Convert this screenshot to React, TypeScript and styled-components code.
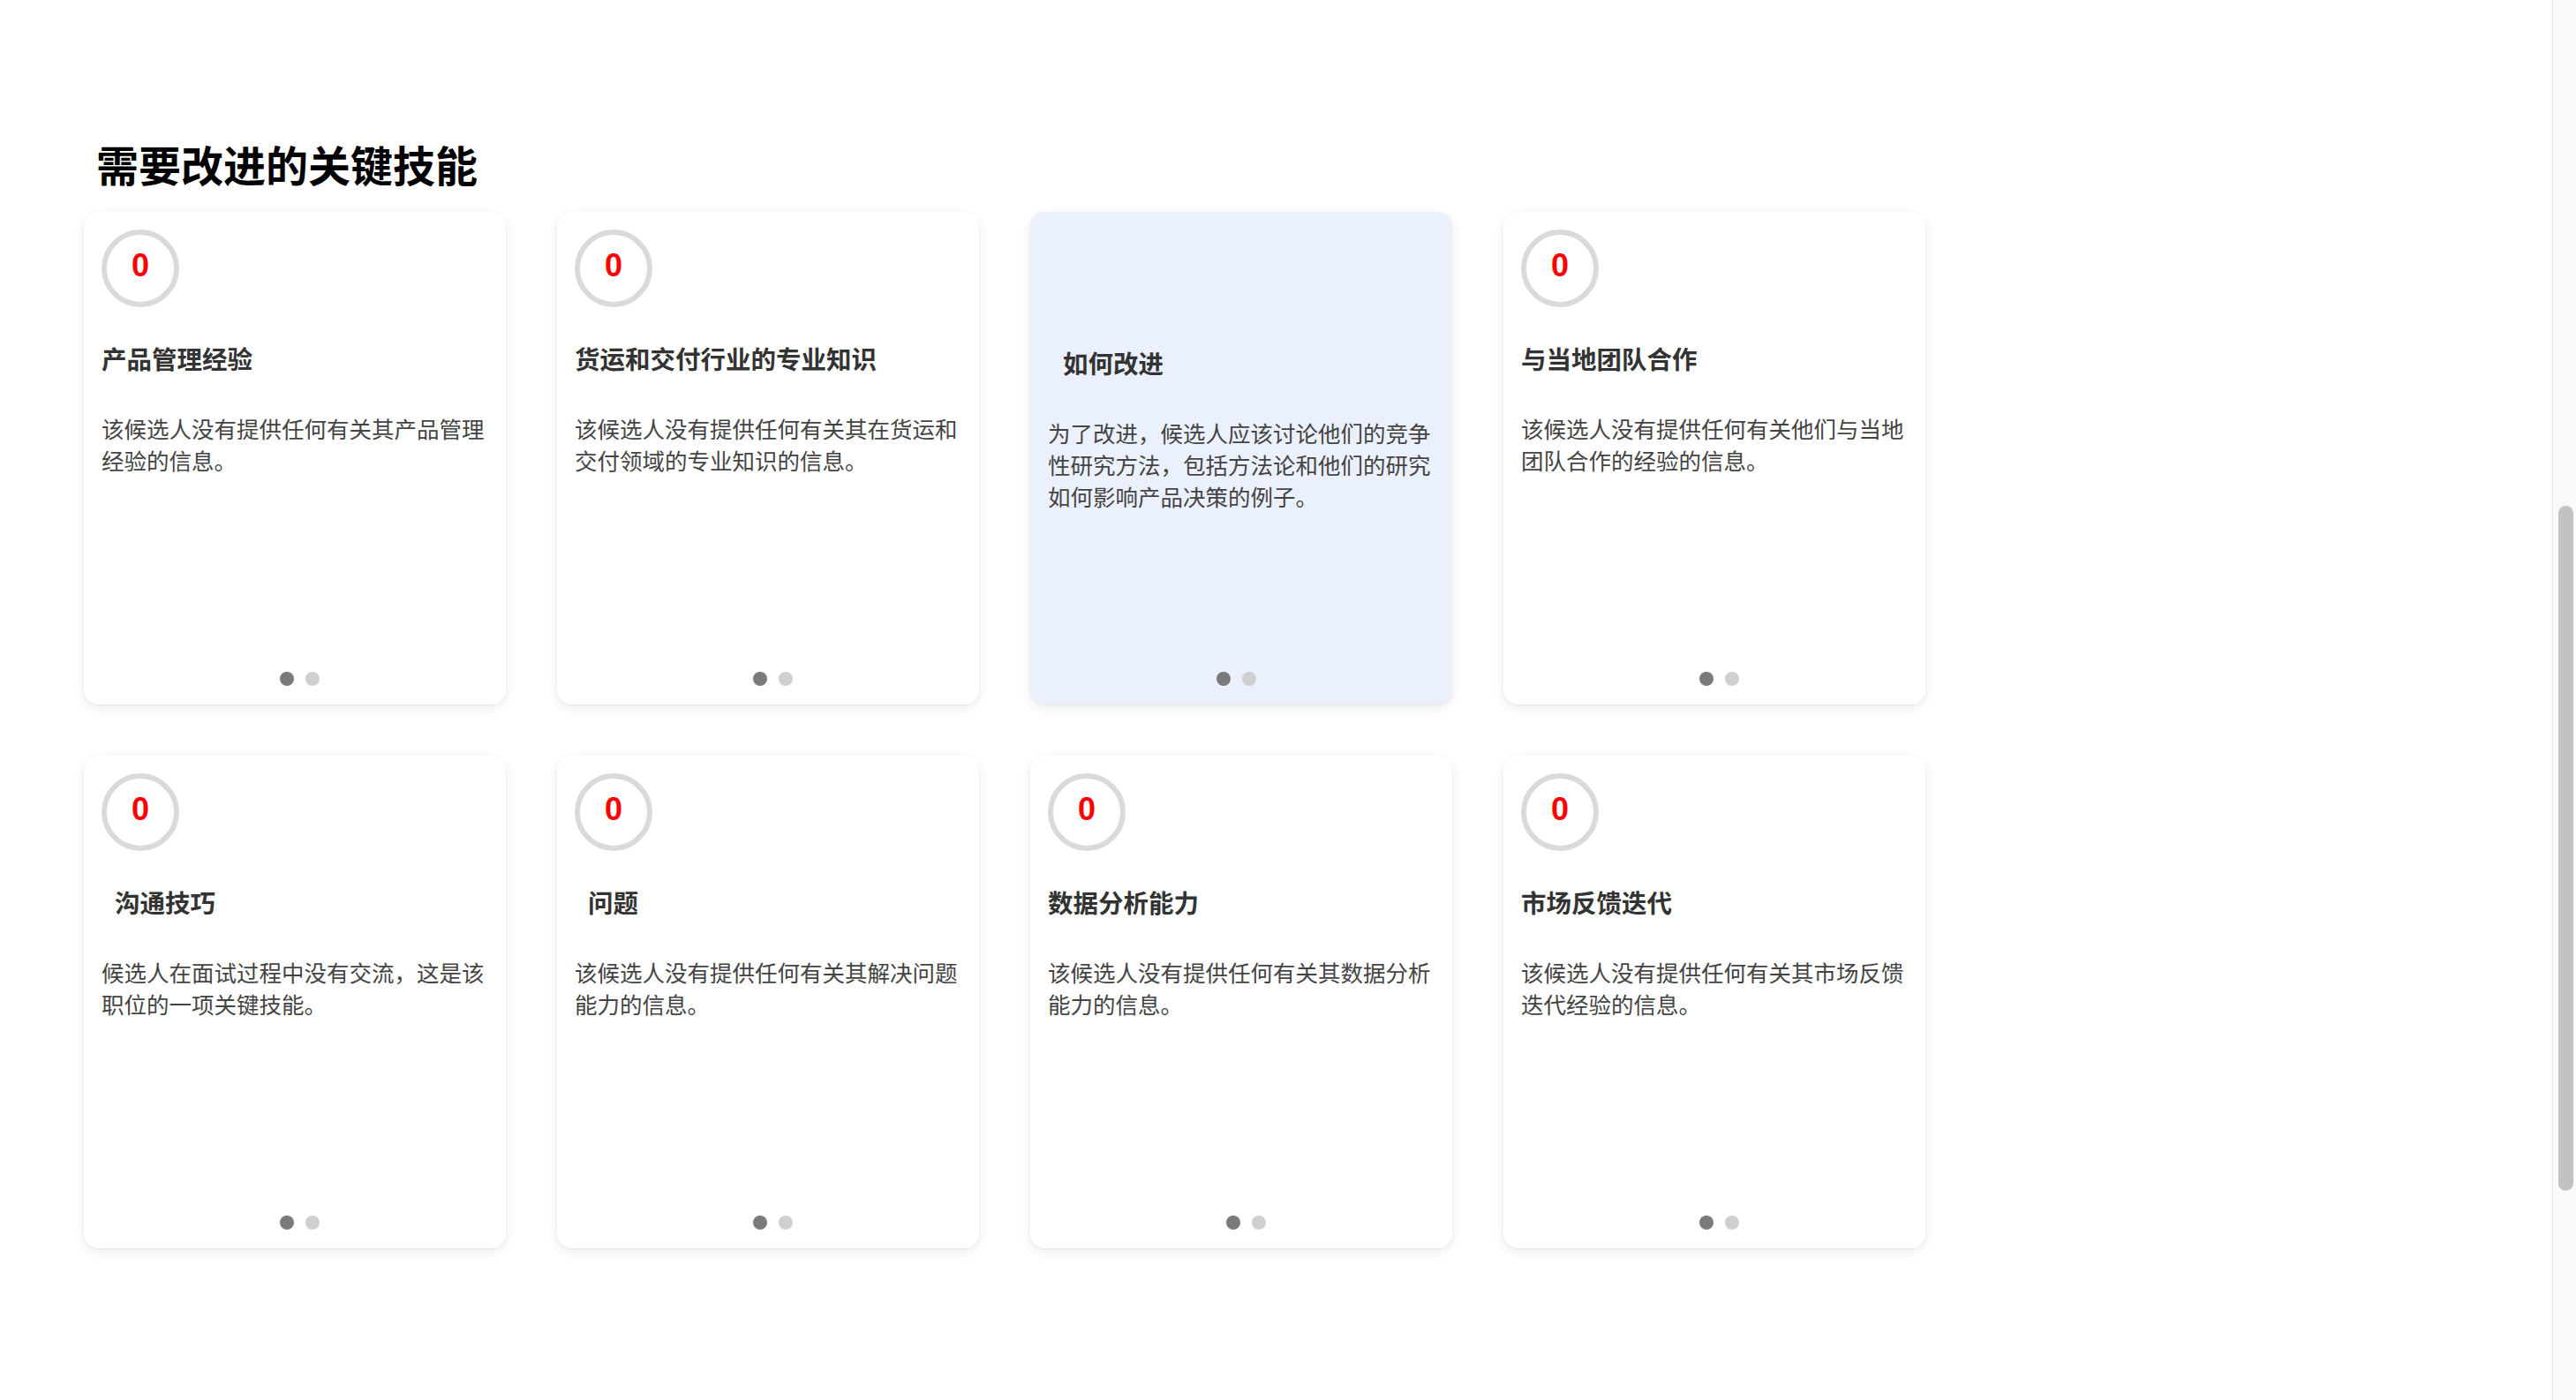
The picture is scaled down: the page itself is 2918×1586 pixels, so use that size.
import React from "react";
import styled, { createGlobalStyle } from "styled-components";

const GlobalStyle = createGlobalStyle`
  html, body {
    margin: 0;
    padding: 0;
    background: #ffffff;
    overflow: hidden;
  }
  body {
    font-family: "Noto Sans CJK SC", "Noto Sans", sans-serif;
  }
  * { box-sizing: border-box; }
`;

const Page = styled.div`
  display: flex;
  flex-direction: row;
  height: 100vh;
  width: 100%;
`;

const Main = styled.main`
  flex: 1;
  padding: 156px 0 0 95px;
  overflow: hidden;
`;

const SectionTitle = styled.h2`
  margin: 0 0 26px 0;
  padding-left: 14px;
  font-size: 48px;
  line-height: 58px;
  font-weight: 700;
  color: #000000;
  font-family: "Noto Sans CJK SC", sans-serif;
`;

const Grid = styled.div`
  display: grid;
  grid-template-columns: repeat(4, 478px);
  column-gap: 58px;
  row-gap: 58px;
`;

const Card = styled.div<{ $back?: boolean }>`
  display: flex;
  flex-direction: column;
  height: 558px;
  padding: 20px 20px 21px 20px;
  border-radius: 16px;
  background: ${(p) => (p.$back ? "#ebf0fd" : "#ffffff")};
  box-shadow: 0 4px 14px rgba(0, 0, 0, 0.08), 0 1px 3px rgba(0, 0, 0, 0.05);
`;

const ScoreRing = styled.div`
  width: 88px;
  height: 88px;
  border-radius: 50%;
  border: 6px solid #dadada;
  display: flex;
  align-items: center;
  justify-content: center;
  padding-bottom: 6px;
  flex: none;
`;

const Score = styled.span`
  font-family: "Liberation Sans", Arial, sans-serif;
  font-weight: 700;
  font-size: 36px;
  color: #ff0000;
  line-height: 1;
`;

const SkillName = styled.h3<{ $top: number; $indent?: number }>`
  margin: ${(p) => p.$top}px 0 0 0;
  padding-left: ${(p) => p.$indent ?? 0}px;
  font-size: 28.5px;
  line-height: 40px;
  font-weight: 700;
  color: #333333;
`;

const Desc = styled.p`
  margin: 41px 0 0 0;
  font-size: 25.5px;
  line-height: 36px;
  color: #444444;
`;

const Dots = styled.div<{ $shift: number }>`
  margin-top: auto;
  display: flex;
  justify-content: center;
  gap: 13px;
  padding-left: ${(p) => (p.$shift > 0 ? p.$shift * 2 : 0)}px;
  padding-right: ${(p) => (p.$shift < 0 ? -p.$shift * 2 : 0)}px;
`;

const Dot = styled.span<{ $active?: boolean }>`
  width: 16px;
  height: 16px;
  border-radius: 50%;
  background: ${(p) => (p.$active ? "#7a7a7a" : "#cfcfcf")};
`;

const ScrollTrack = styled.aside`
  flex: none;
  width: 27px;
  height: 100%;
  background: #f9f9f9;
  border-left: 1px solid #e4e4e4;
  padding-left: 6px;
`;

const ScrollThumb = styled.div`
  margin-top: 573px;
  width: 17px;
  height: 776px;
  border-radius: 9px;
  background: #c2c2c2;
`;

type Skill = {
  title: string;
  desc: string;
  back?: boolean;
  indent?: number;
};

const skills: Skill[] = [
  { title: "产品管理经验", desc: "该候选人没有提供任何有关其产品管理经验的信息。" },
  { title: "货运和交付行业的专业知识", desc: "该候选人没有提供任何有关其在货运和交付领域的专业知识的信息。" },
  {
    title: "如何改进",
    desc: "为了改进，候选人应该讨论他们的竞争性研究方法，包括方法论和他们的研究如何影响产品决策的例子。",
    back: true,
    indent: 17,
  },
  { title: "与当地团队合作", desc: "该候选人没有提供任何有关他们与当地团队合作的经验的信息。" },
  { title: "沟通技巧", desc: "候选人在面试过程中没有交流，这是该职位的一项关键技能。", indent: 15 },
  { title: "问题", desc: "该候选人没有提供任何有关其解决问题能力的信息。", indent: 15 },
  { title: "数据分析能力", desc: "该候选人没有提供任何有关其数据分析能力的信息。" },
  { title: "市场反馈迭代", desc: "该候选人没有提供任何有关其市场反馈迭代经验的信息。" },
];

const SkillCard: React.FC<{ skill: Skill }> = ({ skill }) => (
  <Card $back={skill.back}>
    {!skill.back && (
      <ScoreRing>
        <Score>0</Score>
      </ScoreRing>
    )}
    <SkillName $top={skill.back ? 131 : 38} $indent={skill.indent}>
      {skill.title}
    </SkillName>
    <Desc>{skill.desc}</Desc>
    <Dots $shift={skill.back ? -6 : 5}>
      <Dot $active />
      <Dot />
    </Dots>
  </Card>
);

export default function App() {
  return (
    <>
      <GlobalStyle />
      <Page>
        <Main>
          <SectionTitle>需要改进的关键技能</SectionTitle>
          <Grid>
            {skills.map((s) => (
              <SkillCard key={s.title} skill={s} />
            ))}
          </Grid>
        </Main>
        <ScrollTrack>
          <ScrollThumb />
        </ScrollTrack>
      </Page>
    </>
  );
}
